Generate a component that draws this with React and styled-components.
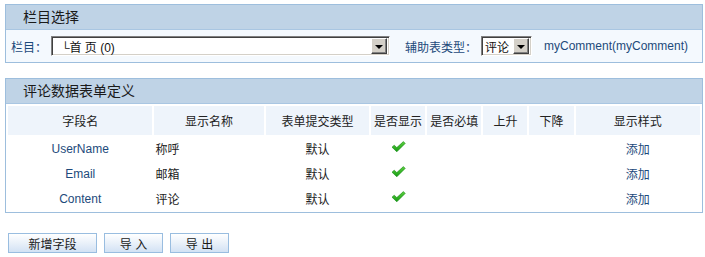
import React from 'react';
import styled, { createGlobalStyle } from 'styled-components';

const GlobalStyle = createGlobalStyle`
  body {
    margin: 0;
    background: #fff;
    font-family: "Liberation Sans", "Noto Sans CJK SC", sans-serif;
    font-size: 12px;
    color: #222;
  }
`

const Page = styled.div`
  width: 698px;
  padding: 4px 0 0 5px;
`

const Panel = styled.div`
  border: 1px solid #9dbedd;
  background: ${p => p.tint ? '#f4f9fe' : '#fff'};
  margin-bottom: ${p => p.gap || 0}px;
`

const PanelHead = styled.div`
  height: 24px;
  line-height: 24px;
  padding-left: 17px;
  background: #bfd3e6;
  border-bottom: 1px solid #a9c6e2;
  font-size: 14px;
  color: #1a1a1a;
`

const FilterRow = styled.div`
  display: flex;
  align-items: center;
  height: 32px;
  padding: 0 5px;
`

const Label = styled.span`
  color: #1d4a7b;
  margin-right: ${p => p.gap || 4}px;
  margin-left: ${p => p.lead || 0}px;
`

const Select = styled.div`
  display: flex;
  align-items: center;
  box-sizing: border-box;
  width: ${p => p.w}px;
  height: 20px;
  background: #fff;
  border-top: 1px solid #808080;
  border-left: 1px solid #808080;
  border-right: 1px solid #fff;
  border-bottom: 1px solid #fff;
  box-shadow: inset 1px 1px 0 #404040, inset -1px -1px 0 #d4d0c8;
  padding: 2px 2px 2px 3px;
`

const SelectText = styled.span`
  flex: 1;
  color: #111;
  white-space: pre;
  padding-left: ${p => p.pad || 0}px;
`

const DropBtn = styled.span`
  display: flex;
  align-items: center;
  justify-content: center;
  box-sizing: border-box;
  width: 16px;
  height: 16px;
  background: #d4d0c8;
  border-top: 1px solid #fff;
  border-left: 1px solid #fff;
  border-right: 1px solid #404040;
  border-bottom: 1px solid #404040;
  box-shadow: inset -1px -1px 0 #808080;
  &::after {
    content: '';
    border-left: 4px solid transparent;
    border-right: 4px solid transparent;
    border-top: 4px solid #000;
    margin-top: 1px;
  }
`

const TableLink = styled.span`
  color: #1d4a7b;
  margin-left: 12px;
`

const Grid = styled.table`
  width: 100%;
  table-layout: fixed;
  border-collapse: separate;
  border-spacing: 2px;
`

const HeadCell = styled.th`
  height: 29px;
  padding: 0;
  background: #eef4fb;
  font-weight: normal;
  color: #222;
  text-align: center;
`

const Cell = styled.td`
  height: 23px;
  padding: 0 1px;
  text-align: ${p => p.align || 'center'};
  color: ${p => p.link ? '#1d4a7b' : '#222'};
`

const Actions = styled.div`
  display: flex;
  gap: 7px;
  margin-top: 20px;
  padding-left: 3px;
`

const Button = styled.button`
  box-sizing: border-box;
  width: ${p => p.w}px;
  height: 20px;
  padding: 0;
  border: 1px solid #99bde0;
  background: linear-gradient(#ffffff, #d3e2f4);
  font-family: inherit;
  font-size: 12px;
  color: #1a1a1a;
  white-space: pre;
`

const Check = () => (
  <svg width="15" height="12" viewBox="0 0 15 12">
    <defs>
      <linearGradient id="ck" x1="0" y1="0" x2="0" y2="1">
        <stop offset="0" stopColor="#5fd040" />
        <stop offset="1" stopColor="#139a12" />
      </linearGradient>
    </defs>
    <path d="M1 6.2 L3.2 4.2 L5.8 6.6 L12.4 0.6 L14.2 2.4 L5.8 10.8 Z" fill="url(#ck)" stroke="#138a12" strokeWidth="0.6" />
  </svg>
)

const columns = [
  { title: '字段名', w: 144 },
  { title: '显示名称', w: 109 },
  { title: '表单提交类型', w: 103 },
  { title: '是否显示', w: 54 },
  { title: '是否必填', w: 54 },
  { title: '上升', w: 44 },
  { title: '下降', w: 44 },
  { title: '显示样式', w: 124 },
];

const fields = [
  { name: 'UserName', label: '称呼' },
  { name: 'Email', label: '邮箱' },
  { name: 'Content', label: '评论' },
];

const App = () => {
  return <>
    <GlobalStyle />
    <Page>
      <Panel tint gap={15}>
        <PanelHead>栏目选择</PanelHead>
        <FilterRow>
          <Label>栏目：</Label>
          <Select w={339}>
            <SelectText pad={6}>└首 页 (0)</SelectText>
            <DropBtn />
          </Select>
          <Label lead={15} gap={4}>辅助表类型：</Label>
          <Select w={51}>
            <SelectText>评论</SelectText>
            <DropBtn />
          </Select>
          <TableLink>myComment(myComment)</TableLink>
        </FilterRow>
      </Panel>

      <Panel>
        <PanelHead>评论数据表单定义</PanelHead>
        <Grid>
          <colgroup>
            {columns.map(c => <col key={c.title} style={{ width: c.w }} />)}
          </colgroup>
          <thead>
            <tr>
              {columns.map(c => <HeadCell key={c.title}>{c.title}</HeadCell>)}
            </tr>
          </thead>
          <tbody>
            {fields.map(f => (
              <tr key={f.name}>
                <Cell link>{f.name}</Cell>
                <Cell align="left">{f.label}</Cell>
                <Cell>默认</Cell>
                <Cell><Check /></Cell>
                <Cell />
                <Cell />
                <Cell />
                <Cell link>添加</Cell>
              </tr>
            ))}
          </tbody>
        </Grid>
      </Panel>

      <Actions>
        <Button w={89}>新增字段</Button>
        <Button w={59}>导 入</Button>
        <Button w={59}>导 出</Button>
      </Actions>
    </Page>
  </>
}

export default App;
